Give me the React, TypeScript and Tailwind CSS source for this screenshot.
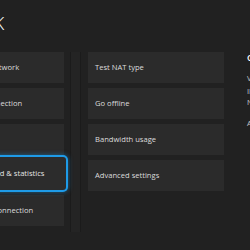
import React from "react";

const left = [
  "Set up wireless network",
  "Test network connection",
  "Troubleshoot",
  "Test network speed & statistics",
  "Test multiplayer connection",
];
const right = ["Test NAT type", "Go offline", "Bandwidth usage", "Advanced settings"];

function Tile({ label, focused }: { label: string; focused?: boolean }) {
  if (focused) {
    return (
      <div className="relative mt-[-3px] flex h-[33px] w-[138px] shrink-0 items-center rounded-[3px] bg-[#2c2c2c] pl-[7px] pt-[1px] text-[#e6e6e6] shadow-[0_0_0_2px_#1e9be8,0_0_5px_2px_rgba(30,155,232,0.5)]">
        <span className="whitespace-nowrap">{label}</span>
      </div>
    );
  }
  return (
    <div className="flex h-[31px] w-[136px] shrink-0 items-center bg-[#2b2b2b] pl-[7px] pt-[1px] text-[#dcdcdc]">
      <span className="whitespace-nowrap">{label}</span>
    </div>
  );
}

export default function App() {
  return (
    <div
      className="relative h-[250px] w-[250px] overflow-hidden bg-[#212121]"
      style={{ fontFamily: '"Open Sans", "Noto Sans", sans-serif' }}
    >
      <div className="flex h-[52px] items-start pt-[14px]">
        <div className="ml-[-79px] shrink-0 whitespace-nowrap text-[18px] font-light leading-none text-white">NETWORK</div>
      </div>
      <div className="ml-[-72px] flex text-[7.6px]">
        <div className="flex w-[136px] shrink-0 flex-col gap-[5px]">
          {left.map((l, i) => (
            <Tile key={l} label={l} focused={i === 3} />
          ))}
        </div>
        <div className="ml-[6px] mr-[7px] h-[180px] w-[11px] shrink-0 border-x border-[#1b1b1b] bg-[#242424]" />
        <div className="flex w-[136px] shrink-0 flex-col gap-[5px]">
          {right.map((l) => (
            <Tile key={l} label={l} />
          ))}
        </div>
        <div className="ml-[23px] flex shrink-0 flex-col whitespace-nowrap">
          <div className="text-[9px] font-semibold leading-[12px] text-white">Current network status</div>
          <div className="mt-[9px] leading-[11px] text-[#c4c4c4]">Verifying connection</div>
          <div className="mt-[2px] leading-[11px] text-[#c4c4c4]">IP address: 192.168.1.4</div>
          <div className="leading-[11px] text-[#c4c4c4]">NAT type: Open</div>
          <div className="mt-[10px] leading-[11px] text-[#c4c4c4]">Alternate MAC address</div>
        </div>
      </div>
    </div>
  );
}
